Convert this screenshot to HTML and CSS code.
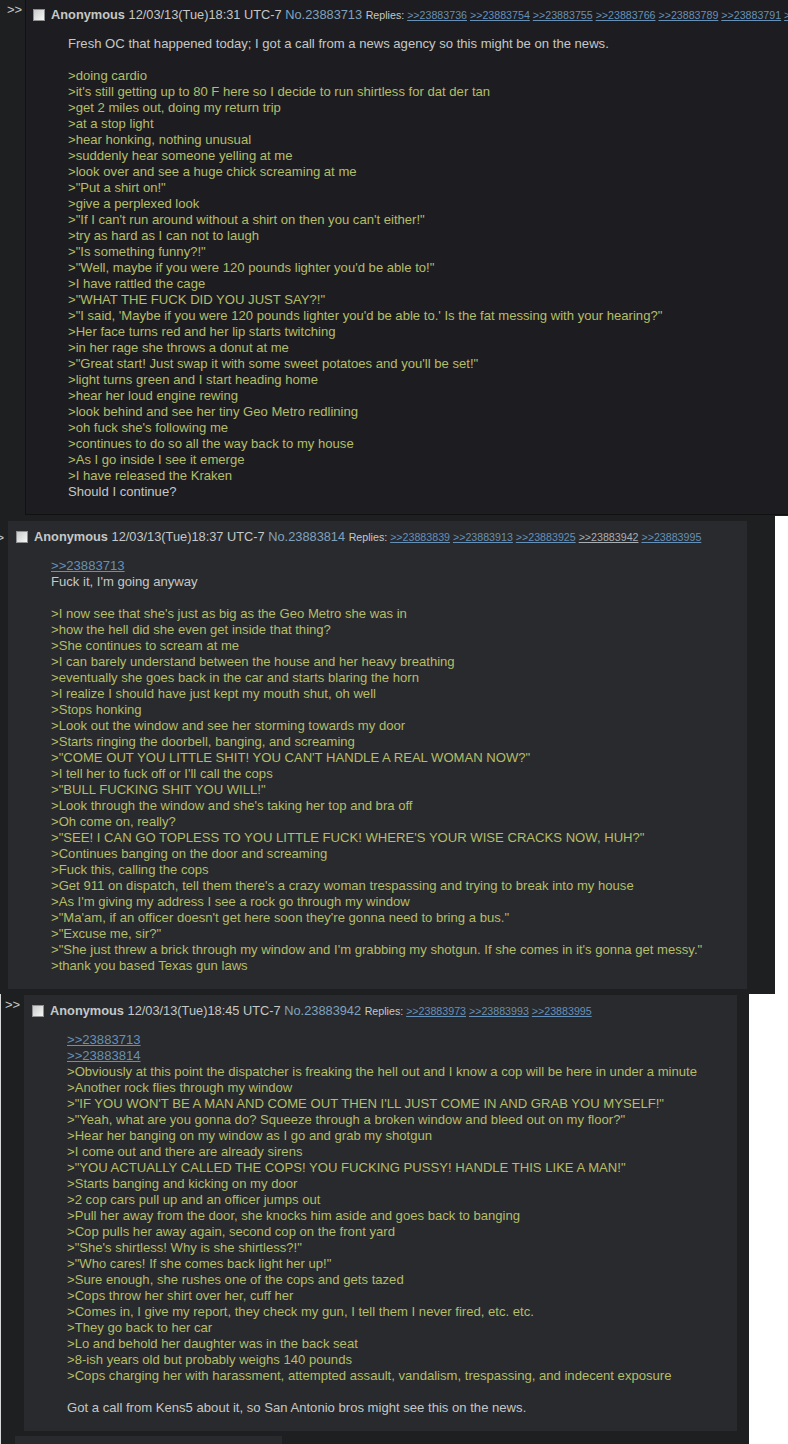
FILE: index.html
```html
<!DOCTYPE html>
<html lang="en">
<head>
  <meta charset="UTF-8" />
  <meta name="viewport" content="width=device-width, initial-scale=1.0"/>
  <title>Thread</title>
  <link rel="stylesheet" href="styles.css">
</head>
<body>
  <div class="shot shot-1">
    <div class="thread">
      <div class="side">&gt;&gt;</div>
      <div class="post hl">
        <div class="info">
          <span class="check"></span><span class="name">Anonymous</span>
          <span class="date">12/03/13(Tue)18:31 UTC-7</span>
          <a class="num">No.23883713</a>
          <span class="replies">Replies: <a>&gt;&gt;23883736</a> <a>&gt;&gt;23883754</a> <a>&gt;&gt;23883755</a> <a>&gt;&gt;23883766</a> <a>&gt;&gt;23883789</a> <a>&gt;&gt;23883791</a> <a>&gt;&gt;23883806</a></span>
        </div>
        <blockquote>
          Fresh OC that happened today; I got a call from a news agency so this might be on the news.<br><br>
          <span class="quote">&gt;doing cardio</span><br>
          <span class="quote">&gt;it's still getting up to 80 F here so I decide to run shirtless for dat der tan</span><br>
          <span class="quote">&gt;get 2 miles out, doing my return trip</span><br>
          <span class="quote">&gt;at a stop light</span><br>
          <span class="quote">&gt;hear honking, nothing unusual</span><br>
          <span class="quote">&gt;suddenly hear someone yelling at me</span><br>
          <span class="quote">&gt;look over and see a huge chick screaming at me</span><br>
          <span class="quote">&gt;"Put a shirt on!"</span><br>
          <span class="quote">&gt;give a perplexed look</span><br>
          <span class="quote">&gt;"If I can't run around without a shirt on then you can't either!"</span><br>
          <span class="quote">&gt;try as hard as I can not to laugh</span><br>
          <span class="quote">&gt;"Is something funny?!"</span><br>
          <span class="quote">&gt;"Well, maybe if you were 120 pounds lighter you'd be able to!"</span><br>
          <span class="quote">&gt;I have rattled the cage</span><br>
          <span class="quote">&gt;"WHAT THE FUCK DID YOU JUST SAY?!"</span><br>
          <span class="quote">&gt;"I said, 'Maybe if you were 120 pounds lighter you'd be able to.' Is the fat messing with your hearing?"</span><br>
          <span class="quote">&gt;Her face turns red and her lip starts twitching</span><br>
          <span class="quote">&gt;in her rage she throws a donut at me</span><br>
          <span class="quote">&gt;"Great start! Just swap it with some sweet potatoes and you'll be set!"</span><br>
          <span class="quote">&gt;light turns green and I start heading home</span><br>
          <span class="quote">&gt;hear her loud engine rewing</span><br>
          <span class="quote">&gt;look behind and see her tiny Geo Metro redlining</span><br>
          <span class="quote">&gt;oh fuck she's following me</span><br>
          <span class="quote">&gt;continues to do so all the way back to my house</span><br>
          <span class="quote">&gt;As I go inside I see it emerge</span><br>
          <span class="quote">&gt;I have released the Kraken</span><br>
          Should I continue?
        </blockquote>
      </div>
    </div>
  </div>

  <div class="shot shot-2">
    <div class="thread">
      <div class="side">&gt;&gt;</div>
      <div class="post">
        <div class="info">
          <span class="check"></span><span class="name">Anonymous</span>
          <span class="date">12/03/13(Tue)18:37 UTC-7</span>
          <a class="num">No.23883814</a>
          <span class="replies">Replies: <a>&gt;&gt;23883839</a> <a>&gt;&gt;23883913</a> <a>&gt;&gt;23883925</a> <a class="seen">&gt;&gt;23883942</a> <a>&gt;&gt;23883995</a></span>
        </div>
        <blockquote>
          <a class="qlink">&gt;&gt;23883713</a><br>
          Fuck it, I'm going anyway<br><br>
          <span class="quote">&gt;I now see that she's just as big as the Geo Metro she was in</span><br>
          <span class="quote">&gt;how the hell did she even get inside that thing?</span><br>
          <span class="quote">&gt;She continues to scream at me</span><br>
          <span class="quote">&gt;I can barely understand between the house and her heavy breathing</span><br>
          <span class="quote">&gt;eventually she goes back in the car and starts blaring the horn</span><br>
          <span class="quote">&gt;I realize I should have just kept my mouth shut, oh well</span><br>
          <span class="quote">&gt;Stops honking</span><br>
          <span class="quote">&gt;Look out the window and see her storming towards my door</span><br>
          <span class="quote">&gt;Starts ringing the doorbell, banging, and screaming</span><br>
          <span class="quote">&gt;"COME OUT YOU LITTLE SHIT! YOU CAN'T HANDLE A REAL WOMAN NOW?"</span><br>
          <span class="quote">&gt;I tell her to fuck off or I'll call the cops</span><br>
          <span class="quote">&gt;"BULL FUCKING SHIT YOU WILL!"</span><br>
          <span class="quote">&gt;Look through the window and she's taking her top and bra off</span><br>
          <span class="quote">&gt;Oh come on, really?</span><br>
          <span class="quote">&gt;"SEE! I CAN GO TOPLESS TO YOU LITTLE FUCK! WHERE'S YOUR WISE CRACKS NOW, HUH?"</span><br>
          <span class="quote">&gt;Continues banging on the door and screaming</span><br>
          <span class="quote">&gt;Fuck this, calling the cops</span><br>
          <span class="quote">&gt;Get 911 on dispatch, tell them there's a crazy woman trespassing and trying to break into my house</span><br>
          <span class="quote">&gt;As I'm giving my address I see a rock go through my window</span><br>
          <span class="quote">&gt;"Ma'am, if an officer doesn't get here soon they're gonna need to bring a bus."</span><br>
          <span class="quote">&gt;"Excuse me, sir?"</span><br>
          <span class="quote">&gt;"She just threw a brick through my window and I'm grabbing my shotgun. If she comes in it's gonna get messy."</span><br>
          <span class="quote">&gt;thank you based Texas gun laws</span>
        </blockquote>
      </div>
    </div>
  </div>

  <div class="shot shot-3">
    <div class="thread">
      <div class="side">&gt;&gt;</div>
      <div class="post">
        <div class="info">
          <span class="check"></span><span class="name">Anonymous</span>
          <span class="date">12/03/13(Tue)18:45 UTC-7</span>
          <a class="num">No.23883942</a>
          <span class="replies">Replies: <a>&gt;&gt;23883973</a> <a>&gt;&gt;23883993</a> <a>&gt;&gt;23883995</a></span>
        </div>
        <blockquote>
          <a class="qlink">&gt;&gt;23883713</a><br>
          <a class="qlink">&gt;&gt;23883814</a><br>
          <span class="quote">&gt;Obviously at this point the dispatcher is freaking the hell out and I know a cop will be here in under a minute</span><br>
          <span class="quote">&gt;Another rock flies through my window</span><br>
          <span class="quote">&gt;"IF YOU WON'T BE A MAN AND COME OUT THEN I'LL JUST COME IN AND GRAB YOU MYSELF!"</span><br>
          <span class="quote">&gt;"Yeah, what are you gonna do? Squeeze through a broken window and bleed out on my floor?"</span><br>
          <span class="quote">&gt;Hear her banging on my window as I go and grab my shotgun</span><br>
          <span class="quote">&gt;I come out and there are already sirens</span><br>
          <span class="quote">&gt;"YOU ACTUALLY CALLED THE COPS! YOU FUCKING PUSSY! HANDLE THIS LIKE A MAN!"</span><br>
          <span class="quote">&gt;Starts banging and kicking on my door</span><br>
          <span class="quote">&gt;2 cop cars pull up and an officer jumps out</span><br>
          <span class="quote">&gt;Pull her away from the door, she knocks him aside and goes back to banging</span><br>
          <span class="quote">&gt;Cop pulls her away again, second cop on the front yard</span><br>
          <span class="quote">&gt;"She's shirtless! Why is she shirtless?!"</span><br>
          <span class="quote">&gt;"Who cares! If she comes back light her up!"</span><br>
          <span class="quote">&gt;Sure enough, she rushes one of the cops and gets tazed</span><br>
          <span class="quote">&gt;Cops throw her shirt over her, cuff her</span><br>
          <span class="quote">&gt;Comes in, I give my report, they check my gun, I tell them I never fired, etc. etc.</span><br>
          <span class="quote">&gt;They go back to her car</span><br>
          <span class="quote">&gt;Lo and behold her daughter was in the back seat</span><br>
          <span class="quote">&gt;8-ish years old but probably weighs 140 pounds</span><br>
          <span class="quote">&gt;Cops charging her with harassment, attempted assault, vandalism, trespassing, and indecent exposure</span><br><br>
          Got a call from Kens5 about it, so San Antonio bros might see this on the news.
        </blockquote>
      </div>
    </div>
    <div class="next"></div>
  </div>
</body>
</html>
```

FILE: styles.css
```css
body {
  margin: 0;
  background: #fff;
  font-family: "Liberation Sans", Arial, sans-serif;
  font-size: 13.1px;
  color: #c5c8c6;
}
.shot {
  background: #1d1f21;
  overflow: hidden;
  box-sizing: border-box;
}
.shot-1 {
  width: 788px;
  height: 516px;
}
.shot-2 {
  width: 775px;
  height: 478px;
  padding-top: 5px;
}
.shot-3 {
  width: 749px;
  height: 450px;
  padding-top: 1px;
  box-shadow: inset 1px 0 #d8d8d8;
}
.thread {
  display: flex;
  align-items: flex-start;
}
.side {
  flex: none;
  box-sizing: border-box;
  font-size: 13px;
  line-height: 13px;
  color: #c5c8c6;
  white-space: nowrap;
}
.shot-1 .side {
  width: 25px;
  padding: 3px 0 0 7px;
}
.shot-2 .side {
  width: 8px;
  padding-top: 10px;
  text-indent: -11px;
}
.shot-3 .side {
  width: 24px;
  padding: 3px 0 0 5px;
}
.post {
  flex: none;
  box-sizing: border-box;
  background: #282a2e;
  border: 1px solid #282a2e;
  padding: 6px 2px 0;
}
.post.hl {
  background: #1d1d21;
  border-color: #111;
  width: 820px;
  margin-top: -1px;
}
.shot-2 .post {
  width: 739px;
}
.shot-3 .post {
  width: 713px;
}
.info {
  font-size: 12.8px;
  line-height: 18px;
  white-space: nowrap;
}
.check {
  display: inline-block;
  width: 12px;
  height: 12px;
  box-sizing: border-box;
  margin: 0 6px 0 5px;
  vertical-align: -2px;
  border: 1px solid #8e8f90;
  background: linear-gradient(135deg, #c9cacb, #f7f7f7);
}
.name {
  font-weight: bold;
}
.num {
  color: #81a2be;
}
.replies {
  font-size: 10.67px;
}
.replies a,
.qlink {
  color: #6790b6;
  text-decoration: underline;
}
.replies a.seen {
  color: #a9aeb3;
}
blockquote {
  margin: 12px 40px 14px 40px;
  line-height: 16px;
  white-space: nowrap;
}
.quote {
  color: #b5bd68;
}
.next {
  margin: 5px 0 0 15px;
  width: 267px;
  height: 10px;
  background: #282a2e;
}
```
